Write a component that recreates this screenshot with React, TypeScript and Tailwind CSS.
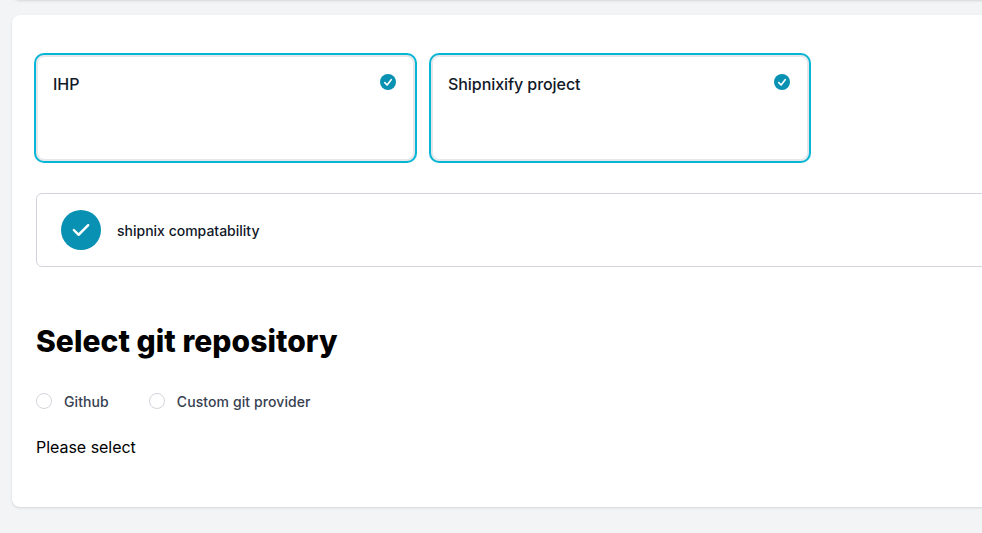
import React from 'react';

function ProjectCard({ title }: { title: string }) {
  return (
    <div className="flex h-[106px] items-start justify-between rounded-lg border-2 border-[#e5e7eb] bg-white pt-[15px] pr-[15px] pl-[15px] shadow-sm ring-2 ring-[#06b6d4]">
      <span className="text-base leading-6 font-medium tracking-[-0.06px] text-[#111827]">{title}</span>
      <svg className="h-5 w-5" viewBox="0 0 20 20" fill="none">
        <circle cx="10" cy="10" r="8" fill="#0891b2" />
        <path d="M6.8 10.7L9.1 13L13.2 7.7" stroke="white" strokeWidth="1.65" strokeLinecap="round" strokeLinejoin="round" />
      </svg>
    </div>
  );
}

function RadioOption({ label }: { label: string }) {
  return (
    <label className="flex items-center">
      <span className="h-4 w-4 rounded-full border border-[#d1d5db] bg-white" />
      <span className="ml-3 -mb-px pt-px text-sm leading-5 font-medium tracking-[0.09px] text-[#374151]">{label}</span>
    </label>
  );
}

export default function App() {
  return (
    <div className="h-[533px] w-[982px] overflow-hidden bg-[#f3f4f6] font-['Inter',sans-serif]">
      <div className="h-[15px] overflow-hidden">
        <div className="-mt-5 ml-3 h-5 w-[1000px] rounded-lg bg-white shadow" />
      </div>
      <main className="ml-3 h-[492px] w-[1000px] rounded-lg bg-white px-6 pt-10 shadow">
        <div className="grid grid-cols-[379px_378px] gap-4">
          <ProjectCard title="IHP" />
          <ProjectCard title="Shipnixify project" />
        </div>
        <div className="mt-8 flex h-[74px] items-center rounded-md border border-[#d1d5db] px-6">
          <span className="flex h-10 w-10 items-center justify-center rounded-full bg-[#0891b2]">
            <svg className="h-6 w-6 text-white" viewBox="0 0 20 20" fill="currentColor">
              <path d="M16.707 5.293a1 1 0 010 1.414l-8 8a1 1 0 01-1.414 0l-4-4a1 1 0 011.414-1.414L8 12.586l7.293-7.293a1 1 0 011.414 0z" />
            </svg>
          </span>
          <span className="ml-4 pt-0.5 text-sm font-medium text-[#111827]">shipnix compatability</span>
        </div>
        <h2 className="mt-14 text-3xl leading-9 font-extrabold tracking-[0.05px] text-black">Select git repository</h2>
        <div className="mt-8 flex gap-10">
          <RadioOption label="Github" />
          <RadioOption label="Custom git provider" />
        </div>
        <p className="mt-6 text-base leading-6 tracking-[-0.03px] text-black">Please select</p>
      </main>
    </div>
  );
}
